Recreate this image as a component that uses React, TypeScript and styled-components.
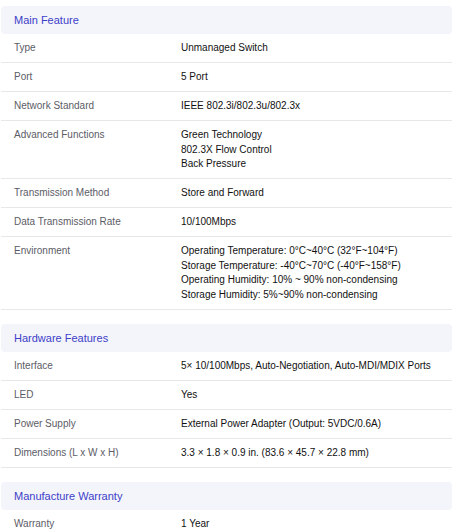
import React from "react";
import styled, { createGlobalStyle } from "styled-components";

const Global = createGlobalStyle`
  html, body { margin: 0; padding: 0; background: #ffffff; }
  body { font-family: "Liberation Sans", Arial, sans-serif; }
`;

const Page = styled.div`
  padding: 6px 0 0 1px;
  display: flex;
  flex-direction: column;
  gap: 14px;
`;

const Section = styled.section`
  display: flex;
  flex-direction: column;
`;

const SectionHeader = styled.h2`
  margin: 0;
  height: 28px;
  line-height: 28px;
  padding: 0 13px;
  background: #f4f5fa;
  border-radius: 4px;
  color: #3d40c9;
  font-size: 11px;
  font-weight: 400;
`;

const Row = styled.div`
  display: flex;
  padding: 7px 13px 6.5px;
  line-height: 14.5px;
  font-size: 10px;
  border-bottom: 1px solid #e8e8ea;
`;

const Label = styled.div`
  flex: 0 0 167px;
  color: #5c5c66;
`;

const Value = styled.div`
  flex: 1 1 auto;
  min-width: 0;
  color: #111111;
  display: flex;
  flex-direction: column;
`;

type Spec = { label: string; values: string[] };

const sections: { title: string; rows: Spec[] }[] = [
  {
    title: "Main Feature",
    rows: [
      { label: "Type", values: ["Unmanaged Switch"] },
      { label: "Port", values: ["5 Port"] },
      { label: "Network Standard", values: ["IEEE 802.3i/802.3u/802.3x"] },
      {
        label: "Advanced Functions",
        values: ["Green Technology", "802.3X Flow Control", "Back Pressure"],
      },
      { label: "Transmission Method", values: ["Store and Forward"] },
      { label: "Data Transmission Rate", values: ["10/100Mbps"] },
      {
        label: "Environment",
        values: [
          "Operating Temperature: 0°C~40°C (32°F~104°F)",
          "Storage Temperature: -40°C~70°C (-40°F~158°F)",
          "Operating Humidity: 10% ~ 90% non-condensing",
          "Storage Humidity: 5%~90% non-condensing",
        ],
      },
    ],
  },
  {
    title: "Hardware Features",
    rows: [
      {
        label: "Interface",
        values: ["5× 10/100Mbps, Auto-Negotiation, Auto-MDI/MDIX Ports"],
      },
      { label: "LED", values: ["Yes"] },
      {
        label: "Power Supply",
        values: ["External Power Adapter (Output: 5VDC/0.6A)"],
      },
      {
        label: "Dimensions (L x W x H)",
        values: ["3.3 × 1.8 × 0.9 in. (83.6 × 45.7 × 22.8 mm)"],
      },
    ],
  },
  {
    title: "Manufacture Warranty",
    rows: [{ label: "Warranty", values: ["1 Year"] }],
  },
];

export default function App() {
  return (
    <>
      <Global />
      <Page>
        {sections.map((s) => (
          <Section key={s.title}>
            <SectionHeader>{s.title}</SectionHeader>
            {s.rows.map((r) => (
              <Row key={r.label}>
                <Label>{r.label}</Label>
                <Value>
                  {r.values.map((v) => (
                    <span key={v}>{v}</span>
                  ))}
                </Value>
              </Row>
            ))}
          </Section>
        ))}
      </Page>
    </>
  );
}
